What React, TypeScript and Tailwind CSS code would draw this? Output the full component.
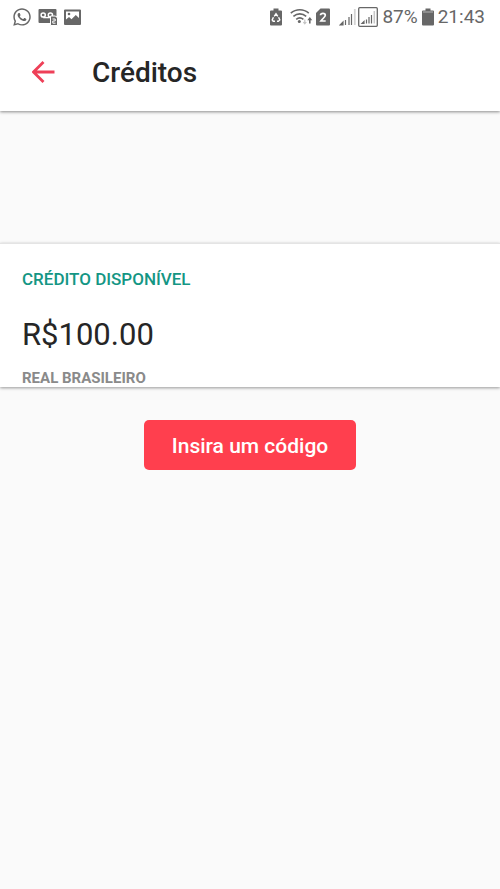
import { FaWhatsapp } from "react-icons/fa";

function VoicemailIcon() {
  return (
    <svg width="20" height="18" viewBox="0 0 20 18" aria-hidden="true">
      <path d="M1.5 1h16a1 1 0 0 1 1 1v6h-5v7h-12a1 1 0 0 1-1-1V2a1 1 0 0 1 1-1z" fill="currentColor" />
      <circle cx="5.2" cy="7" r="2.1" fill="none" stroke="#fff" strokeWidth="1.5" />
      <circle cx="12.4" cy="7" r="2.1" fill="none" stroke="#fff" strokeWidth="1.5" />
      <path d="M5.2 9.6h7.2" stroke="#fff" strokeWidth="1.4" />
      <path d="M12.5 8h5l2 2v7.5h-7z" fill="currentColor" stroke="#fff" strokeWidth="1" />
      <path d="M14.5 11h2.7v2h-2.4v2.2h2.7" fill="none" stroke="#fff" strokeWidth="1" />
    </svg>
  );
}

function PictureIcon() {
  return (
    <svg width="17" height="17" viewBox="0 0 17 17" aria-hidden="true">
      <path
        fillRule="evenodd"
        fill="currentColor"
        d="M1 0.5h15a1 1 0 0 1 1 1v13.500a1 1 0 0 1-1 1H1a1 1 0 0 1-1-1V1.500a1 1 0 0 1 1-1zM2 2.500v8l3-2.500 2.500 2.300 4.300-4.300L15 9V2.500z"
      />
      <circle cx="5" cy="5" r="1.300" fill="currentColor" />
    </svg>
  );
}

function RecycleBatteryIcon() {
  return (
    <svg width="12" height="18" viewBox="0 0 12 18" aria-hidden="true">
      <path d="M3.500 0.500h5v2H11a1 1 0 0 1 1 1v13a1 1 0 0 1-1 1H1a1 1 0 0 1-1-1v-13a1 1 0 0 1 1-1h2.500z" fill="currentColor" />
      <path d="M4.200 8.300 6 5.800l1.800 2.500M8.600 9.200l1.200 2.700-1.400 1.300H7M5 13.200H3.200L2.200 11.900l1.200-2.700" fill="none" stroke="#fff" strokeWidth="1.400" />
    </svg>
  );
}

function WifiIcon() {
  return (
    <svg width="23" height="18" viewBox="0 0 23 18" aria-hidden="true">
      <g fill="none" stroke="currentColor" strokeWidth="1.600">
        <path d="M0.800 5.200c5.200-4.600 12.800-4.600 18 0" />
        <path d="M3.400 8.300c3.800-3.300 9-3.300 12.800 0" />
        <path d="M6.200 11.300c2.200-1.800 5-1.800 7.200 0" />
      </g>
      <circle cx="9.300" cy="13.500" r="1.500" fill="currentColor" />
      <path d="M14.800 11.500v4M13.300 14l1.500 1.900 1.500-1.900" fill="none" stroke="#c4c4c4" strokeWidth="1.200" />
      <path d="M19.800 15.500v-4" stroke="currentColor" strokeWidth="1.600" />
      <path d="m19.800 9 2.500 3.200h-5z" fill="currentColor" />
    </svg>
  );
}

function SimIcon() {
  return (
    <svg width="14" height="18" viewBox="0 0 14 18" aria-hidden="true">
      <path d="M4.500 0.500H13a1 1 0 0 1 1 1v15a1 1 0 0 1-1 1H1a1 1 0 0 1-1-1V5z" fill="currentColor" />
      <path d="M4.500 7.300C4.700 4.600 9.300 4.600 9.300 7.300c0 1.700-2.500 3-4.400 5.700h4.800" fill="none" stroke="#fff" strokeWidth="1.700" />
    </svg>
  );
}

function SignalIcon() {
  return (
    <svg width="17" height="18" viewBox="0 0 17 18" aria-hidden="true">
      <path d="M1 17h3v-3zM6.500 17v-5M10 17V9" fill="currentColor" stroke="currentColor" strokeWidth="1.200" />
      <path d="M12.500 17V6" stroke="currentColor" strokeWidth="1.200" />
      <path d="M15.800 17V1" stroke="#d4d4d4" strokeWidth="1.800" />
    </svg>
  );
}

function BoxedSignalIcon() {
  return (
    <svg width="20" height="20" viewBox="0 0 20 20" aria-hidden="true">
      <rect x="0.700" y="0.700" width="18.600" height="18.600" rx="1" fill="none" stroke="currentColor" strokeWidth="1.300" />
      <path d="M4 16.500h2v-2zM8.500 16.500v-4M11 16.500v-6.500M13.500 16.500V8" fill="currentColor" stroke="currentColor" strokeWidth="1.200" />
      <path d="M16.300 16.500V4" stroke="#c8c8c8" strokeWidth="1.500" />
    </svg>
  );
}

function BatteryIcon() {
  return (
    <svg width="12" height="18" viewBox="0 0 12 18" aria-hidden="true">
      <path d="M3.500 0.500h5v2H11a1 1 0 0 1 1 1v13a1 1 0 0 1-1 1H1a1 1 0 0 1-1-1v-13a1 1 0 0 1 1-1h2.500z" fill="currentColor" />
      <path d="M1 4h10" stroke="#a8a8a8" strokeWidth="1.200" />
    </svg>
  );
}

function StatusBar() {
  return (
    <div className="flex h-[34px] items-center justify-between pr-[15px] pl-3 text-[#676767]">
      <div className="flex items-center gap-[6px]">
        <FaWhatsapp size={20} aria-hidden="true" />
        <VoicemailIcon />
        <PictureIcon />
      </div>
      <div className="flex items-center">
        <div className="mr-2 flex items-center"><RecycleBatteryIcon /></div>
        <div className="mr-[3px] flex items-center"><WifiIcon /></div>
        <div className="mr-[9px] flex items-center"><SimIcon /></div>
        <div className="mr-[2px] flex items-center"><SignalIcon /></div>
        <div className="mr-1 flex items-center"><BoxedSignalIcon /></div>
        <span className="mr-1 text-[19px] leading-6">87%</span>
        <div className="mr-1 flex items-center"><BatteryIcon /></div>
        <time className="text-[19px] leading-6">21:43</time>
      </div>
    </div>
  );
}

export default function App() {
  return (
    <div className="min-h-screen bg-[#fafafa] font-[Roboto,sans-serif] text-[#262626]">
      <header className="bg-white shadow-[0_1px_3px_rgba(0,0,0,0.45)]">
        <StatusBar />
        <div className="flex h-[77px] items-center gap-9 px-8">
          <button type="button" aria-label="Voltar" className="flex text-[#ee4058]">
            <svg width="24" height="24" viewBox="0 0 24 24" fill="none" stroke="currentColor" strokeWidth="2.800" aria-hidden="true">
              <path d="M22.500 11H2M11.500 1l-10 10 10 10" />
            </svg>
          </button>
          <h1 className="text-[28px] leading-8 font-medium">Créditos</h1>
        </div>
      </header>
      <main>
        <section className="mt-[132px] border-t border-[#e4e4e4] bg-white px-[22px] pt-[23px] shadow-[0_1px_3px_rgba(0,0,0,0.4)]">
          <h2 className="text-[17px] leading-6 font-medium text-[#149684]">CRÉDITO DISPONÍVEL</h2>
          <p className="mt-6 text-[31px] leading-10">R$100.00</p>
          <p className="mt-[14px] text-[15px] leading-[18px] font-bold text-[#8a8a8a]">REAL BRASILEIRO</p>
        </section>
        <div className="mt-[33px] flex justify-center">
          <button type="button" className="rounded-[5px] bg-[#ff3f4e] px-7 pt-[11px] pb-[9px] text-[21px] leading-[30px] font-medium text-white">
            Insira um código
          </button>
        </div>
      </main>
    </div>
  );
}
